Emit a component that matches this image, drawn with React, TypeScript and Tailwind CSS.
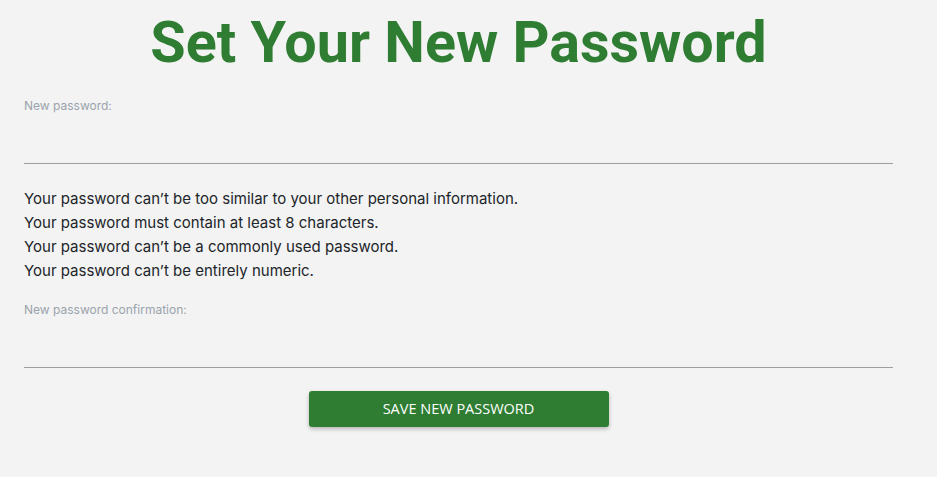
import { useState } from 'react';

const rules = [
  'Your password can’t be too similar to your other personal information.',
  'Your password must contain at least 8 characters.',
  'Your password can’t be a commonly used password.',
  'Your password can’t be entirely numeric.',
];

const App: React.FC = () => {
  const [password, setPassword] = useState('');
  const [confirm, setConfirm] = useState('');

  return (
    <div className="min-h-screen bg-[#f3f3f3] font-['Inter',sans-serif]">
      <div className="ml-6 w-[869px]">
        <h1 className="pt-[11px] text-center font-['Roboto',sans-serif] text-[57.5px] font-bold leading-[64px] text-[#2e7d32]">
          Set Your New Password
        </h1>

        <form className="mt-[23px]" onSubmit={(e) => e.preventDefault()}>
          <label className="block text-xs leading-4 text-[#9aa3ad]">New password:</label>
          <input
            type="password"
            value={password}
            onChange={(e) => setPassword(e.target.value)}
            className="block h-[50px] w-full border-b border-[#9e9e9e] bg-transparent outline-none"
          />

          <ul className="mt-[23px] text-[15px] leading-6 text-[#212529]">
            {rules.map((r) => (
              <li key={r}>{r}</li>
            ))}
          </ul>

          <label className="mt-[19px] block text-xs leading-4 text-[#9aa3ad]">New password confirmation:</label>
          <input
            type="password"
            value={confirm}
            onChange={(e) => setConfirm(e.target.value)}
            className="block h-[50px] w-full border-b border-[#9e9e9e] bg-transparent outline-none"
          />

          <div className="mt-[23px] flex justify-center">
            <button
              type="submit"
              className="h-9 w-[300px] rounded-[3px] bg-[#2e7d32] font-['Open_Sans',sans-serif] text-[14.5px] uppercase text-white shadow-[0_2px_4px_rgba(0,0,0,0.25)]"
            >
              Save New Password
            </button>
          </div>
        </form>
      </div>
    </div>
  );
};

export default App;
